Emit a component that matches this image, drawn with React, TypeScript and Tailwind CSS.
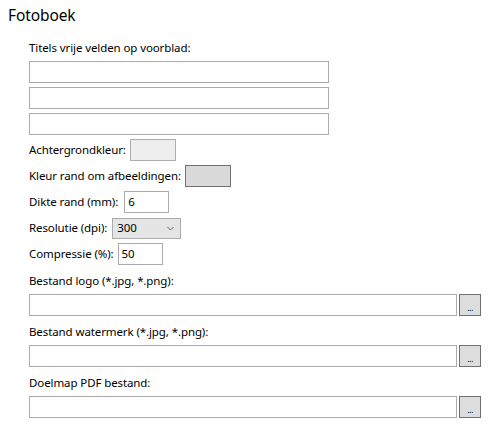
import React from "react";

const font = { fontFamily: '"Segoe UI", "Noto Sans", "Open Sans", sans-serif' };

function TextBox({ value = "", className = "" }: { value?: string; className?: string }) {
  return (
    <div className={`h-[22px] border border-[#ababab] bg-white text-[11.5px] tracking-[-0.1px] leading-[19px] pl-[3px] text-black ${className}`}>
      {value}
    </div>
  );
}

function FileRow({ label }: { label: string }) {
  return (
    <div className="flex flex-col">
      <div className="text-[11.5px] tracking-[-0.1px] leading-[16px] text-black mt-[8px] mb-[5px]">{label}</div>
      <div className="flex items-center gap-[2px]">
        <TextBox className="w-[428px]" />
        <button className="w-[22px] h-[22px] border border-[#707070] bg-[#dddddd] flex items-end justify-center pb-[3px]">
          <span className="text-[9px] leading-[9px] text-black tracking-[-0.5px]">...</span>
        </button>
      </div>
    </div>
  );
}

const lbl = "text-[11.5px] tracking-[-0.1px] text-black";

export default function App() {
  return (
    <div className="w-[492px] h-[431px] bg-white overflow-hidden" style={font}>
      <div className="pl-[8px] pt-[4px] text-[15.5px] tracking-[-0.1px] leading-[22px] text-black">Fotoboek</div>
      <div className="pl-[29px] flex flex-col">
        <div className={`${lbl} leading-[16px] mt-[14px] mb-[5px]`}>Titels vrije velden op voorblad:</div>
        <div className="flex flex-col gap-[4px]">
          <TextBox className="w-[300px]" />
          <TextBox className="w-[300px]" />
          <TextBox className="w-[300px]" />
          <div className="flex items-center gap-[4px] h-[22px]">
            <span className={lbl}>Achtergrondkleur:</span>
            <div className="w-[46px] h-[22px] border border-[#adadad] bg-[#eeeeee]" />
          </div>
          <div className="flex items-center gap-[4px] h-[22px]">
            <span className={lbl}>Kleur rand om afbeeldingen:</span>
            <div className="w-[46px] h-[22px] border border-[#707070] bg-[#dadada]" />
          </div>
          <div className="flex items-center gap-[6px] h-[22px]">
            <span className={lbl}>Dikte rand (mm):</span>
            <TextBox value="6" className="w-[45px] h-[21px]" />
          </div>
          <div className="flex items-center gap-[5px] h-[22px]">
            <span className={lbl}>Resolutie (dpi):</span>
            <div className="w-[69px] h-[21px] border border-[#acacac] bg-[#e5e5e5] flex items-center justify-between pl-[4px] pr-[6px]">
              <span className={lbl}>300</span>
              <svg width="7" height="5" viewBox="0 0 7 5">
                <path d="M0.5 1 L3.5 4 L6.5 1" fill="none" stroke="#606060" strokeWidth="1" />
              </svg>
            </div>
          </div>
          <div className="flex items-center gap-[4px] h-[22px]">
            <span className={lbl}>Compressie (%):</span>
            <TextBox value="50" className="w-[45px] h-[21px]" />
          </div>
        </div>
        <FileRow label="Bestand logo (*.jpg, *.png):" />
        <FileRow label="Bestand watermerk (*.jpg, *.png):" />
        <FileRow label="Doelmap PDF bestand:" />
      </div>
    </div>
  );
}
